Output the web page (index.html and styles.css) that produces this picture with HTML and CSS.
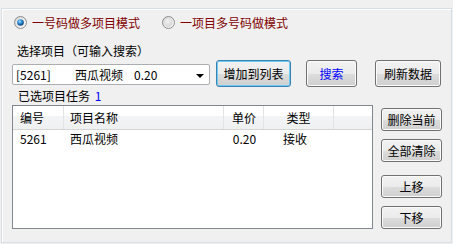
FILE: index.html
```html
<!DOCTYPE html>
<html>
<head>
<meta charset="utf-8">
<link rel="stylesheet" href="styles.css">
</head>
<body>
<div class="panel">
  <div class="mode-row">
    <label class="radio">
      <svg class="radio-icon" width="13" height="13" viewBox="0 0 13 13">
        <defs>
          <linearGradient id="ring1" x1="0" y1="0" x2="1" y2="1">
            <stop offset="0" stop-color="#c9c9c9"/>
            <stop offset="1" stop-color="#ffffff"/>
          </linearGradient>
          <radialGradient id="dot1" cx="40%" cy="35%" r="65%">
            <stop offset="0" stop-color="#a6e4ff"/>
            <stop offset="0.45" stop-color="#2f8fd6"/>
            <stop offset="1" stop-color="#0b3f73"/>
          </radialGradient>
        </defs>
        <circle cx="6.5" cy="6.5" r="6" fill="url(#ring1)" stroke="#8f8f8f"/>
        <circle cx="6.5" cy="6.5" r="4.2" fill="#f4f4f4"/>
        <circle cx="6.5" cy="6.5" r="3.3" fill="url(#dot1)"/>
      </svg>
      <span>一号码做多项目模式</span>
    </label>
    <label class="radio">
      <svg class="radio-icon" width="13" height="13" viewBox="0 0 13 13">
        <defs>
          <linearGradient id="ring2" x1="0" y1="0" x2="1" y2="1">
            <stop offset="0" stop-color="#cfcfcf"/>
            <stop offset="1" stop-color="#ffffff"/>
          </linearGradient>
          <radialGradient id="in2" cx="40%" cy="35%" r="65%">
            <stop offset="0" stop-color="#f2f2f2"/>
            <stop offset="1" stop-color="#d6d6d6"/>
          </radialGradient>
        </defs>
        <circle cx="6.5" cy="6.5" r="6" fill="url(#ring2)" stroke="#8f8f8f"/>
        <circle cx="6.5" cy="6.5" r="4.2" fill="url(#in2)"/>
      </svg>
      <span>一项目多号码做模式</span>
    </label>
  </div>

  <div class="field-label">选择项目（可输入搜索）</div>

  <div class="combo-row">
    <div class="combo">
      <span class="c-id">[5261]</span>
      <span class="c-name">西瓜视频</span>
      <span class="c-price">0.20</span>
      <span class="c-arrow"></span>
    </div>
    <button class="btn btn-add focus">增加到列表</button>
    <button class="btn btn-search">搜索</button>
    <button class="btn btn-refresh">刷新数据</button>
  </div>

  <div class="bottom">
    <div class="left">
      <div class="task-label">已选项目任务 <span class="count">1</span></div>
      <div class="list">
        <div class="grid header">
          <div class="cell c1">编号</div>
          <div class="cell c2">项目名称</div>
          <div class="cell c3">单价</div>
          <div class="cell c4">类型</div>
          <div class="cell c5"></div>
        </div>
        <div class="grid row">
          <div class="cell c1">5261</div>
          <div class="cell c2">西瓜视频</div>
          <div class="cell c3">0.20</div>
          <div class="cell c4 recv">接收</div>
          <div class="cell c5"></div>
        </div>
      </div>
    </div>
    <div class="right">
      <button class="btn side-btn b1">删除当前</button>
      <button class="btn side-btn b2">全部清除</button>
      <button class="btn side-btn b3">上移</button>
      <button class="btn side-btn b4">下移</button>
    </div>
  </div>
</div>
</body>
</html>
```

FILE: styles.css
```css
* { box-sizing: border-box; }
html, body { margin: 0; padding: 0; }
body {
  width: 453px;
  height: 244px;
  background: #f0f0f0;
  font-family: "SimSun", "Noto Sans CJK SC", sans-serif;
  font-size: 12px;
  color: #000;
  overflow: hidden;
}
.panel {
  margin: 8px 1px 0 1px;
  width: 451px;
  height: 235px;
  border: 1px solid #d5dfe5;
  box-shadow: inset 1px 1px 0 #ffffff;
  display: flex;
  flex-direction: column;
}
.mode-row {
  margin-top: 7px;
  margin-left: 12px;
  height: 13px;
  display: flex;
  align-items: center;
}
.radio {
  display: flex;
  align-items: center;
  gap: 5px;
  color: #800000;
  line-height: 13px;
  white-space: nowrap;
}
.radio-icon { display: block; flex: none; }
.radio + .radio { margin-left: 22px; }
.field-label {
  margin-top: 15px;
  margin-left: 15px;
  height: 13px;
  line-height: 13px;
}
.combo-row {
  margin-top: 3px;
  height: 27px;
  padding-left: 10px;
  display: flex;
  align-items: flex-start;
}
.combo {
  margin-top: 4px;
  width: 198px;
  height: 21px;
  background: #fff;
  border: 1px solid #abadb3;
  border-radius: 2px;
  display: flex;
  align-items: center;
  line-height: 19px;
  position: relative;
}
.c-id { margin-left: 3px; width: 59px; }
.c-name { width: 59px; }
.c-price { }
.c-arrow {
  position: absolute;
  right: 5px;
  top: 9px;
  width: 0;
  height: 0;
  border-left: 4px solid transparent;
  border-right: 4px solid transparent;
  border-top: 4px solid #000;
}
.btn {
  font: inherit;
  color: #000;
  height: 27px;
  padding: 0;
  border: 1px solid #707070;
  border-radius: 3px;
  background: linear-gradient(#f2f2f2 0%, #ebebeb 50%, #dddddd 50%, #cfcfcf 100%);
  box-shadow: inset 0 0 0 1px #fbfbfb;
  line-height: 1;
}
.btn.focus {
  border-color: #3c7fb1;
  box-shadow: inset 0 0 0 1px #6fcdf5;
}
.btn-add { margin-left: 6px; width: 75px; }
.btn-search { margin-left: 15px; width: 51px; color: #0000ff; }
.btn-refresh { margin-left: 18px; width: 66px; }
.bottom {
  display: flex;
  margin-left: 10px;
}
.left { width: 361px; }
.task-label {
  height: 18px;
  line-height: 18px;
  padding-left: 6px;
}
.count { color: #0000ff; margin-left: 2px; }
.list {
  height: 124px;
  background: #fff;
  border: 1px solid #828790;
}
.grid {
  display: grid;
  grid-template-columns: 51px 160px 40px 70px 1fr;
}
.header {
  height: 24px;
  background: linear-gradient(#ffffff 0%, #ffffff 42%, #f3f4f6 42%, #eef0f2 100%);
  border-bottom: 1px solid #d5d5d5;
}
.header .cell {
  border-right: 1px solid #e3e4e6;
  line-height: 23px;
}
.header .c5 { border-right: none; }
.cell { white-space: nowrap; overflow: hidden; }
.c1 { padding-left: 7px; }
.c2 { padding-left: 6px; }
.c3 { text-align: center; padding-left: 1px; }
.c4 { text-align: center; }
.row { height: 18px; line-height: 18px; }
.row .recv { text-align: left; padding-left: 19px; }
.right {
  margin-left: 8px;
  padding-top: 21px;
  display: flex;
  flex-direction: column;
}
.side-btn { width: 61px; height: 23px; }
.b2 { margin-top: 8px; }
.b3 { margin-top: 13px; }
.b4 { margin-top: 8px; }
```
